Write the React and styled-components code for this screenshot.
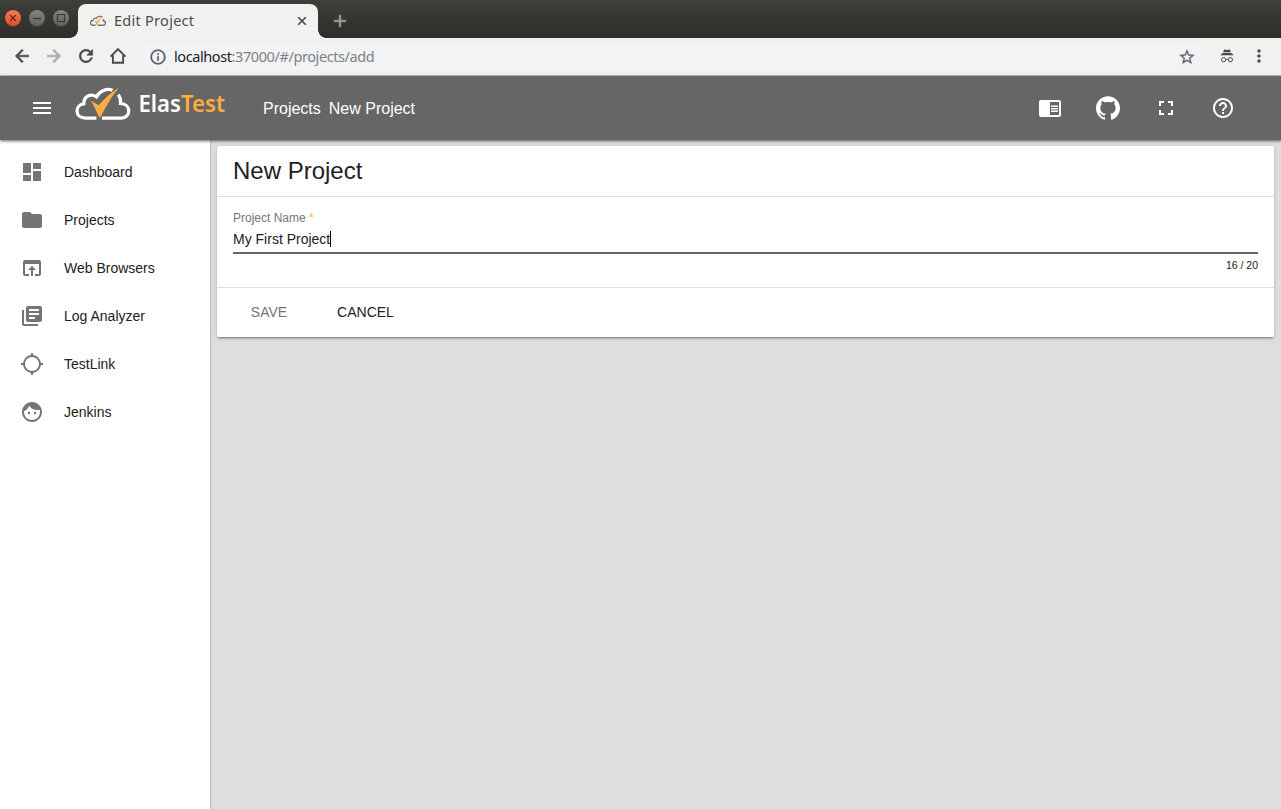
import React from "react";
import styled, { createGlobalStyle } from "styled-components";
import {
  MdDashboard, MdFolder, MdOpenInBrowser, MdLibraryBooks, MdLocationSearching,
  MdFace, MdMenu, MdChromeReaderMode, MdFullscreen, MdHelpOutline, MdArrowBack,
  MdArrowForward, MdRefresh, MdInfoOutline, MdStarBorder, MdMoreVert, MdClose, MdAdd,
} from "react-icons/md";
import { SiGithub } from "react-icons/si";

const Global = createGlobalStyle`
  *, *::before, *::after { box-sizing: border-box; }
  body { margin: 0; font-family: "Liberation Sans", Arial, sans-serif; }
  button { border: 0; padding: 0; background: none; font: inherit; color: inherit; }
  svg { display: block; flex: none; }
  svg[fill="currentColor"] path[fill="none"] { stroke: none; }
`;

const Window = styled.div`
  width: 1281px;
  height: 809px;
  display: flex;
  flex-direction: column;
  overflow: hidden;
  background: #dedede;
`;

const TabStrip = styled.div`
  height: 38px;
  flex: none;
  display: flex;
  align-items: flex-start;
  background: linear-gradient(#3f3e3a, #2e2d2a);
`;

const WindowControls = styled.div`
  display: flex;
  gap: 8px;
  padding: 10px 0 0 5px;
  width: 78px;
`;

const WindowButton = styled.button`
  width: 16px;
  height: 16px;
  border-radius: 50%;
  background: ${(p) => (p.$close ? "linear-gradient(#f37c5c, #dd4d25)" : "linear-gradient(#86847c, #62615b)")};
  box-shadow: 0 0 0 0.5px #292825, 0 1px 0 #504f4a;
  svg { stroke: ${(p) => (p.$close ? "#57200f" : "#383733")}; fill: none; stroke-width: 1.2; }
`;

const Tab = styled.div`
  position: relative;
  width: 240px;
  height: 34px;
  margin-top: 4px;
  padding: 0 9px 0 12px;
  display: flex;
  align-items: center;
  border-radius: 8px 8px 0 0;
  background: #f2f1f0;
  color: #4c4c4c;
  font: 14.5px "Noto Sans", "Open Sans", sans-serif;
  > svg:last-child { stroke-width: 1; }
  &::before, &::after {
    content: "";
    position: absolute;
    bottom: 0;
    width: 8px;
    height: 8px;
  }
  &::before { left: -8px; background: radial-gradient(circle at 0 0, transparent 7.5px, #f2f1f0 8px); }
  &::after { right: -8px; background: radial-gradient(circle at 100% 0, transparent 7.5px, #f2f1f0 8px); }
`;

const TabTitle = styled.span`
  flex: 1;
  margin-left: 8px;
  padding-bottom: 2px;
  letter-spacing: 0.27px;
  line-height: 32px;
`;

const NewTab = styled.button`
  margin: 11px 0 0 12px;
  color: #a3a29f;
  svg { stroke-width: 0.6; }
`;

const BrowserBar = styled.div`
  height: 38px;
  flex: none;
  display: flex;
  align-items: center;
  padding: 0 12px;
  background: #f2f1f0;
  border-bottom: 1px solid #c9c8c7;
  color: #4a4a4a;
`;

const NavButtons = styled.div`
  display: flex;
  gap: 12px;
  width: 128px;
  margin-top: -1px;
  svg { stroke-width: 0.7; }
  svg:last-child { stroke-width: 1.9; }
`;

const AddressBar = styled.div`
  width: 1065px;
  height: 28px;
  display: flex;
  align-items: center;
  padding: 0 9px;
  border-radius: 14px;
  background: #f1f3f5;
  svg { stroke-width: 0.4; }
`;

const Address = styled.span`
  flex: 1;
  margin-left: 7px;
  padding-bottom: 2px;
  font: 14.5px/26px "Noto Sans", "Open Sans", sans-serif;
  letter-spacing: -0.41px;
  color: #808285;
  b { font-weight: 400; color: #202124; }
`;

const BrowserActions = styled.div`
  display: flex;
  align-items: center;
  gap: 15px;
  margin-left: 15px;
  margin-top: -1px;
`;

const AppHeader = styled.header`
  position: relative;
  z-index: 2;
  height: 64px;
  flex: none;
  display: flex;
  align-items: center;
  padding: 0 46px 0 30px;
  background: #666;
  color: #fff;
  box-shadow: 0 1px 3px rgba(0, 0, 0, 0.6);
`;

const Brand = styled.div`
  width: 156px;
  margin: 0 35px 6px 18px;
`;

const Breadcrumbs = styled.nav`
  flex: 1;
  display: flex;
  gap: 8px;
  padding-top: 2px;
  font-size: 16px;
  line-height: 24px;
`;

const HeaderActions = styled.div`
  display: flex;
  gap: 33.75px;
  align-items: center;
  width: 197px;
`;

const Body = styled.div`
  flex: 1;
  display: flex;
  min-height: 0;
`;

const Sidebar = styled.aside`
  width: 210px;
  padding-top: 8px;
  background: #fff;
  box-shadow: 0 0 2px rgba(0, 0, 0, 0.45);
`;

const MenuItem = styled.div`
  height: 48px;
  display: flex;
  align-items: center;
  gap: 20px;
  padding-left: 20px;
  font-size: 14px;
  color: #212121;
  svg { color: #757575; }
`;

const Content = styled.main`
  flex: 1;
  padding: 6px 7px;
`;

const Card = styled.section`
  height: 191px;
  display: flex;
  flex-direction: column;
  border-radius: 2px;
  background: #fff;
  color: #212121;
  box-shadow: 0 3px 1px -2px rgba(0, 0, 0, 0.2), 0 2px 2px rgba(0, 0, 0, 0.14), 0 1px 5px rgba(0, 0, 0, 0.12);
`;

const CardTitle = styled.h1`
  height: 51px;
  margin: 0;
  padding: 0 16px;
  border-bottom: 1px solid #dcdcdc;
  font-size: 24px;
  font-weight: 400;
  line-height: 50px;
`;

const CardBody = styled.div`
  height: 91px;
  padding: 13px 16px 0;
  border-bottom: 1px solid #dcdcdc;
`;

const Label = styled.label`
  display: block;
  font-size: 12px;
  line-height: 16px;
  color: #757575;
  span { color: #ffac41; }
`;

const Field = styled.div`
  height: 28px;
  display: flex;
  align-items: center;
  padding-bottom: 1px;
  border-bottom: 2px solid #666;
  font-size: 14px;
`;

const Caret = styled.i`
  width: 1px;
  height: 16px;
  background: #000;
`;

const Counter = styled.div`
  padding-top: 5px;
  text-align: right;
  font-size: 10.5px;
  line-height: 13px;
`;

const CardActions = styled.div`
  flex: 1;
  display: flex;
  align-items: center;
  padding: 0 16px 2px;
  gap: 14px;
`;

const ActionButton = styled.button`
  width: ${(p) => p.$width};
  height: 36px;
  font-size: 14px;
  color: ${(p) => (p.disabled ? "#757575" : "#212121")};
`;

const CLOUD = "M21 35H11C-1 34-1 18 11 17C12 8 20 7 23 9C29 0 42 0 47 5M49 12C50 14 50 16 50 18C61 19 60 35 50 35H28";

function CloudMark({ color, width, height, stroke }) {
  return (
    <svg width={width} height={height} viewBox="0 0 60 38">
      <path d={CLOUD} fill="none" stroke={color} strokeWidth={stroke} />
      <path d="M17 16L25 21L47 1L25 34Z" fill="#ffac41" />
    </svg>
  );
}

function Logo() {
  return (
    <svg width="156" height="40" viewBox="0 0 156 40">
      <g fill="none" stroke="#fff" strokeWidth="3.2">
        <path d="M24.4 33.1H13.5C2.6 33.1 2.4 20 11.8 18.9C11.7 11 18.8 8.1 24.5 11.8C27.2 6 35 2.9 40.5 5.3" />
        <path d="M46.3 9.6C48.3 12.4 49 15 48.5 18.5C59.4 18.8 59.4 33.1 49 33.1H30" />
      </g>
      <path d="M19 15.8L26.8 20.2Q36 9.2 47 2.4Q38 13 28.4 32.2H27Q23.4 23.5 19 15.8Z" fill="#ffac41" />
      <text x="66.5" y="26.5" fontFamily="Noto Sans, sans-serif" fontSize="23" fontWeight="600" fill="#fff" textLength="42.5" lengthAdjust="spacingAndGlyphs">Elas</text>
      <text x="109" y="26.5" fontFamily="Noto Sans, sans-serif" fontSize="23" fontWeight="600" fill="#ffac41" textLength="44" lengthAdjust="spacingAndGlyphs">Test</text>
    </svg>
  );
}

function HomeIcon() {
  return (
    <svg width="20" height="20" viewBox="0 0 20 20" fill="none" stroke="currentColor" strokeWidth="1.9">
      <path d="M2.6 10.6L10 3.2L17.4 10.6M4.9 9.2V16.8H15.1V9.2" />
    </svg>
  );
}

function IncognitoIcon() {
  return (
    <svg width="14" height="14" viewBox="0 0 14 14" fill="currentColor">
      <path d="M4 0.4L7 1L10 0.4L10.8 3.2H3.2Z M2.7 3.9H11.3L13.8 6.2H0.2Z" />
      <g fill="none" stroke="currentColor" strokeWidth="1">
        <circle cx="3.6" cy="10.7" r="2.1" />
        <circle cx="10.4" cy="10.7" r="2.1" />
        <path d="M5.7 10.5Q7 9.7 8.3 10.5" style={undefined} />
      </g>
    </svg>
  );
}

const menu = [
  ["Dashboard", MdDashboard],
  ["Projects", MdFolder],
  ["Web Browsers", MdOpenInBrowser],
  ["Log Analyzer", MdLibraryBooks],
  ["TestLink", MdLocationSearching],
  ["Jenkins", MdFace],
];

export default function App() {
  return (
    <>
      <Global />
      <Window>
        <TabStrip>
          <WindowControls>
            <WindowButton $close aria-label="Close">
              <svg width="16" height="16"><path d="M5.2 5.2l5.6 5.6M10.8 5.2l-5.6 5.6" /></svg>
            </WindowButton>
            <WindowButton aria-label="Minimize">
              <svg width="16" height="16"><path d="M4 8.5h8" /></svg>
            </WindowButton>
            <WindowButton aria-label="Maximize">
              <svg width="16" height="16"><path d="M4.5 4.5h7v7h-7z" /></svg>
            </WindowButton>
          </WindowControls>
          <Tab>
            <CloudMark color="#757575" width={16} height={12} stroke={5} />
            <TabTitle>Edit Project</TabTitle>
            <MdClose size={14} />
          </Tab>
          <NewTab aria-label="New tab"><MdAdd size={20} /></NewTab>
        </TabStrip>

        <BrowserBar>
          <NavButtons>
            <MdArrowBack size={20} />
            <MdArrowForward size={20} color="#a8a7a6" />
            <MdRefresh size={20} />
            <HomeIcon />
          </NavButtons>
          <AddressBar>
            <MdInfoOutline size={18} color="#5f6368" />
            <Address><b>localhost</b>:37000/#/projects/add</Address>
            <MdStarBorder size={18} color="#5f6368" />
          </AddressBar>
          <BrowserActions>
            <IncognitoIcon />
            <MdMoreVert size={20} />
          </BrowserActions>
        </BrowserBar>

        <AppHeader>
          <MdMenu size={24} />
          <Brand><Logo /></Brand>
          <Breadcrumbs><span>Projects</span><span>New Project</span></Breadcrumbs>
          <HeaderActions>
            <MdChromeReaderMode size={24} />
            <SiGithub size={24} />
            <MdFullscreen size={24} />
            <MdHelpOutline size={24} />
          </HeaderActions>
        </AppHeader>

        <Body>
          <Sidebar>
            {menu.map(([name, Icon]) => (
              <MenuItem key={name}><Icon size={24} />{name}</MenuItem>
            ))}
          </Sidebar>
          <Content>
            <Card>
              <CardTitle>New Project</CardTitle>
              <CardBody>
                <Label>Project Name <span>*</span></Label>
                <Field>My First Project<Caret /></Field>
                <Counter>16 / 20</Counter>
              </CardBody>
              <CardActions>
                <ActionButton disabled $width="72px">SAVE</ActionButton>
                <ActionButton $width="93px">CANCEL</ActionButton>
              </CardActions>
            </Card>
          </Content>
        </Body>
      </Window>
    </>
  );
}
